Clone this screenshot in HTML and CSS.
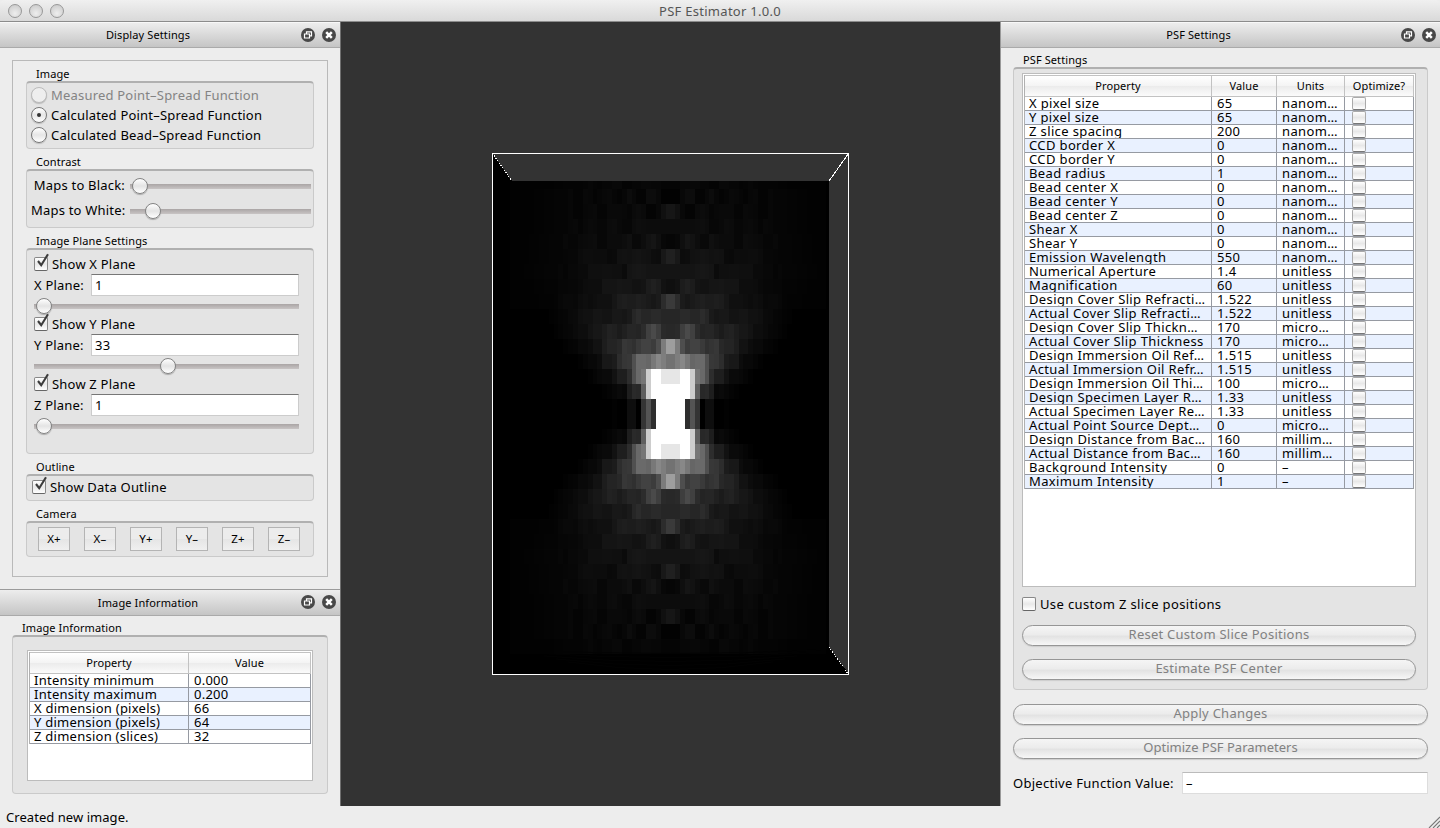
FILE: index.html
```html
<!DOCTYPE html>
<html lang="en">
<head>
<meta charset="utf-8">
<title>PSF Estimator 1.0.0</title>
<link rel="stylesheet" href="styles.css">
</head>
<body>
<svg class="defs" width="0" height="0">
  <symbol id="float" viewBox="0 0 14 14"><circle cx="7" cy="7" r="7" fill="#484848"/><path d="M5.5 5.5V3.8H10.5V7.8H9M3.5 6H8.5V10H3.5Z" fill="none" stroke="#fff" stroke-width="1.2"/></symbol>
  <symbol id="close" viewBox="0 0 14 14"><circle cx="7" cy="7" r="7" fill="#484848"/><path d="M4.2 4.2L9.8 9.8M9.8 4.2L4.2 9.8" stroke="#fff" stroke-width="2.5"/></symbol>
  <symbol id="tick" viewBox="0 0 16 17"><path d="M4 8L7.2 12.2L14 1.2" fill="none" stroke="#3c3c3c" stroke-width="2.1"/></symbol>
</svg>
<div class="titlebar"><div class="lights"><i></i><i></i><i></i></div><span>PSF Estimator 1.0.0</span></div>
<main>
  <aside class="left">
    <div class="dockhead"><span>Display Settings</span><svg><use href="#float"/></svg><svg><use href="#close"/></svg></div>
    <div class="frame">
      <h2>Image</h2>
      <div class="group radios">
        <label class="off"><i class="radio"></i><span>Measured Point–Spread Function</span></label>
        <label><i class="radio on"></i><span>Calculated Point–Spread Function</span></label>
        <label><i class="radio"></i><span>Calculated Bead–Spread Function</span></label>
      </div>
      <h2>Contrast</h2>
      <div class="group contrast">
        <div class="maps"><span>Maps to Black:</span><div class="slider"><i class="black"></i></div></div>
        <div class="maps"><span>Maps to White:</span><div class="slider"><i class="white"></i></div></div>
      </div>
      <h2>Image Plane Settings</h2>
      <div class="group planes">
        <label class="check"><i class="box"><svg><use href="#tick"/></svg></i><span>Show X Plane</span></label>
        <div class="field"><span>X Plane:</span><b>1</b></div>
        <div class="slider"><i class="first"></i></div>
        <label class="check"><i class="box"><svg><use href="#tick"/></svg></i><span>Show Y Plane</span></label>
        <div class="field"><span>Y Plane:</span><b>33</b></div>
        <div class="slider"><i class="middle"></i></div>
        <label class="check"><i class="box"><svg><use href="#tick"/></svg></i><span>Show Z Plane</span></label>
        <div class="field"><span>Z Plane:</span><b>1</b></div>
        <div class="slider"><i class="first"></i></div>
      </div>
      <h2>Outline</h2>
      <div class="group outline"><label class="check"><i class="box"><svg><use href="#tick"/></svg></i><span>Show Data Outline</span></label></div>
      <h2>Camera</h2>
      <div class="group camera"><button>X+</button><button>X–</button><button>Y+</button><button>Y–</button><button>Z+</button><button>Z–</button></div>
    </div>
    <div class="dockhead second"><span>Image Information</span><svg><use href="#float"/></svg><svg><use href="#close"/></svg></div>
    <h2 class="infotitle">Image Information</h2>
    <div class="group infobox">
      <div class="tableframe"><div class="table info" id="info"></div></div>
    </div>
  </aside>
  <section class="view"><svg id="scene" width="659" height="784" viewBox="341 22 659 784"></svg></section>
  <aside class="right">
    <div class="dockhead"><span>PSF Settings</span><svg><use href="#float"/></svg><svg><use href="#close"/></svg></div>
    <h2 class="psftitle">PSF Settings</h2>
    <div class="group psfbox">
      <div class="tableframe"><div class="table psf" id="psf"></div></div>
      <label class="check custom"><i class="box"></i><span>Use custom Z slice positions</span></label>
      <button class="pill p1">Reset Custom Slice Positions</button>
      <button class="pill p2">Estimate PSF Center</button>
    </div>
    <button class="pill outer">Apply Changes</button>
    <button class="pill outer tight">Optimize PSF Parameters</button>
    <div class="objective"><span>Objective Function Value:</span><b>–</b></div>
  </aside>
</main>
<footer><span>Created new image.</span><svg width="12" height="12"><path d="M1 12L12 1M5 12L12 5M9 12L12 9" stroke="#777" stroke-width="1.1"/></svg></footer>
<script src="app.js"></script>
</body>
</html>
```
FILE: styles.css
```css
* { box-sizing: border-box; }
body { margin: 0; width: 1440px; height: 828px; display: flex; flex-direction: column; overflow: hidden; background: #ededed; color: #000; font: 13px/16px "Noto Sans", "Open Sans", sans-serif; white-space: nowrap; }
.defs { position: absolute; }
i, b, h2 { font-style: normal; font-weight: 400; margin: 0; }
button { font: inherit; padding: 0; margin: 0; }
.titlebar { height: 22px; display: grid; grid-template-columns: 72px 1fr 72px; align-items: center; text-align: center; background: linear-gradient(#f0f0f0, #d9d9d9); border-bottom: 1px solid #8c8c8c; border-radius: 5px 5px 0 0; color: #555; letter-spacing: .28px; }
.lights { display: flex; gap: 7px; padding-left: 8px; }
.lights i { width: 14px; height: 14px; border: 1px solid #989898; border-radius: 50%; background: radial-gradient(circle at 50% 70%, #eee, #c6c6c6); }
main { height: 784px; display: grid; grid-template-columns: 341px 659px 440px; letter-spacing: .2px; }
.left { border-right: 1px solid #707070; }
.right { border-left: 1px solid #999; }
.view { background: #333; }
.view svg { display: block; }
.dockhead { height: 26px; display: flex; align-items: center; border-top: 1px solid #f8f8f8; border-bottom: 1px solid #aaa; background: linear-gradient(#ededed, #c5c5c5); font-size: 11px; padding-right: 4px; gap: 7px; }
.dockhead span { flex: 1; text-align: center; padding-left: 2px; letter-spacing: .12px; }
.dockhead svg { width: 14px; height: 14px; margin-top: -1px; }
h2 { height: 14px; font-size: 11px; line-height: 14px; padding-left: 10px; letter-spacing: .1px; }
.group { border: 1px solid #cacaca; border-top: 2px solid #b0b0b0; border-radius: 4px; background: #e4e4e4; }
.frame { margin: 12px 12px 12px; height: 517px; border: 1px solid #b9b9b9; padding: 6px 13px; }
.frame .group { margin-bottom: 6px; }
.radios { height: 68px; padding: 2px 4px; }
.radios label { height: 20px; display: flex; align-items: center; gap: 4px; }
.radio { width: 16px; height: 16px; border: 1px solid #777; border-radius: 50%; background: linear-gradient(#fff, #e6e6e6 50%, #fff); display: grid; place-items: center; box-shadow: 0 1px 1px #bbb; }
.radio.on::after { content: ""; width: 4px; height: 4px; border-radius: 50%; background: #333; }
.off { color: #838383; }
.off .radio { border-color: #bbb; background: #eee; }
.contrast { height: 59px; padding: 2px 1px 0 4px; }
.maps { height: 25px; display: grid; grid-template-columns: 94px 181px; column-gap: 5px; align-items: center; text-align: right; }
.maps > span { margin-top: -1px; }
.slider { height: 18px; display: flex; align-items: center; background: linear-gradient(#aaa5a5, #c8c4c4) center 7px / 100% 5px no-repeat; border-radius: 2px; }
.slider i { width: 16px; height: 16px; border: 1px solid #838383; border-radius: 50%; background: linear-gradient(#fff, #e4e4e4 50%, #fff); box-shadow: 0 1px 1px #aaa; }
.black { margin-left: 2px; }
.white { margin-left: 15px; }
.planes { height: 206px; padding: 4px 14px 0 7px; }
.check { display: flex; align-items: center; gap: 4px; height: 20px; }
.box { width: 14px; height: 14px; border: 1px solid #888; border-bottom-color: #666; border-radius: 2px; background: linear-gradient(#fff, #e8e8e8 50%, #fff); display: block; flex: none; }
.box svg { display: block; width: 16px; height: 17px; margin: -5px 0 0 -1px; overflow: visible; }
.field { display: flex; height: 22px; }
.field span { width: 57px; line-height: 23px; }
.field b { flex: 1; border: 1px solid #ccc; border-top: 1px solid #777; background: #fff; padding-left: 3px; line-height: 21px; }
.planes .slider { height: 14px; margin: 3px 0 1px; background-position: center 5px; }
.first { margin-left: 2px; }
.middle { margin-left: 126px; }
.outline { height: 27px; padding: 1px 5px; }
.camera { height: 36px; padding: 4px 11px; display: flex; gap: 14px; }
.camera button { width: 32px; height: 24px; border: 1px solid #b4b4b4; background: linear-gradient(#ececec 50%, #e5e5e5 50%, #f0f0f0); font-size: 11.5px; letter-spacing: .2px; }
.dockhead.second { height: 27px; border-top: 1px solid #9b9b9b; }
.infotitle { margin: 5px 0 0 12px; }
.infobox { height: 159px; margin: 0 12px; padding: 13px 14px; }
.tableframe { border: 1px solid #bcbcbc; background: #fff; padding: 1px; }
.infobox .tableframe { height: 131px; width: 286px; }
.table { display: grid; border-left: 1px solid #b0b0b0; letter-spacing: .37px; }
.table span { height: 14px; border-right: 1px solid #969aa2; border-bottom: 1px solid #969aa2; line-height: 13px; padding-left: 5px; overflow: hidden; }
.table .first-col { padding-left: 4px; }
.table .alt { background: #e9f1ff; }
.table .head { height: 22px; font-size: 11px; line-height: 20px; text-align: center; padding: 0; letter-spacing: .1px; border-color: #c2c2c2; border-top: 1px solid #c2c2c2; background: linear-gradient(#fff, #f4f4f4 48%, #ebebeb 50%, #fbfbfb); }
.info { grid-template-columns: 159px 122px; letter-spacing: .25px; }
.psf { grid-template-columns: 187px 65px 68px 69px; }
.table .opt { padding-left: 7px; }
.opt .box { height: 13px; border-color: #aaa; border-bottom-color: #777; }
.psftitle { margin: 5px 0 0 12px; }
.psfbox { height: 623px; margin: 0 12px; padding: 4px 11px 0 8px; }
.psfbox .tableframe { height: 514px; }
.custom { margin-top: 7px; letter-spacing: .36px; }
.pill { display: block; width: 100%; height: 21px; border: 1px solid #969696; border-radius: 11px; background: linear-gradient(#f5f5f5, #ececec 45%, #e3e3e3 55%, #f7f7f7); color: #818181; line-height: 17px; padding-bottom: 2px; letter-spacing: .25px; box-shadow: 0 1px 1px #ccc; }
.p1 { margin-top: 11px; }
.p2 { margin-top: 13px; }
.outer { width: 415px; margin: 14px 0 0 12px; }
.outer + .outer { margin-top: 13px; }
.tight { letter-spacing: 0; }
.objective { display: flex; margin: 13px 12px 0; height: 22px; letter-spacing: .28px; }
.objective span { width: 169px; line-height: 23px; }
.objective b { flex: 1; background: #fff; border: 1px solid #ddd; border-top-color: #bbb; padding-left: 3px; line-height: 20px; }
footer { height: 22px; display: flex; justify-content: space-between; align-items: center; padding: 0 0 0 6px; letter-spacing: .05px; }
footer svg { align-self: flex-end; }
```
FILE: app.js
```js
const cell = (text, cls) => `<span class="${cls}">${text}</span>`;

function fillTable(id, heads, rows) {
  let html = heads.map(h => cell(h, "head")).join("");
  rows.forEach((row, n) => {
    const alt = n % 2 ? "alt" : "";
    html += row.map((t, c) => cell(t, alt + (c ? "" : " first-col"))).join("");
    if (heads.length > row.length) html += cell('<i class="box"></i>', alt + " opt");
  });
  document.getElementById(id).innerHTML = html;
}

fillTable("info", ["Property", "Value"], [
  ["Intensity minimum", "0.000"], ["Intensity maximum", "0.200"],
  ["X dimension (pixels)", "66"], ["Y dimension (pixels)", "64"], ["Z dimension (slices)", "32"]
]);

const nm = "nanom…", um = "micro…", mm = "millim…", un = "unitless";
fillTable("psf", ["Property", "Value", "Units", "Optimize?"], [
  ["X pixel size", "65", nm], ["Y pixel size", "65", nm], ["Z slice spacing", "200", nm],
  ["CCD border X", "0", nm], ["CCD border Y", "0", nm], ["Bead radius", "1", nm],
  ["Bead center X", "0", nm], ["Bead center Y", "0", nm], ["Bead center Z", "0", nm],
  ["Shear X", "0", nm], ["Shear Y", "0", nm], ["Emission Wavelength", "550", nm],
  ["Numerical Aperture", "1.4", un], ["Magnification", "60", un],
  ["Design Cover Slip Refracti…", "1.522", un], ["Actual Cover Slip Refracti…", "1.522", un],
  ["Design Cover Slip Thickn…", "170", um], ["Actual Cover Slip Thickness", "170", um],
  ["Design Immersion Oil Ref…", "1.515", un], ["Actual Immersion Oil Refr…", "1.515", un],
  ["Design Immersion Oil Thi…", "100", um], ["Design Specimen Layer R…", "1.33", un],
  ["Actual Specimen Layer Re…", "1.33", un], ["Actual Point Source Dept…", "0", um],
  ["Design Distance from Bac…", "160", mm], ["Actual Distance from Bac…", "160", mm],
  ["Background Intensity", "0", "–"], ["Maximum Intensity", "1", "–"]
]);

// Gray levels by slice distance from focus, then by pixel distance from the axis.
const levels = [
  [255,255,255,46,84,52,0,14,14,0,0,2,0],
  [255,255,255,255,205,95,40,42,30,8,10,7,4,2,0],
  [230,230,255,255,205,118,105,80,45,30,30,18,10,10,8,5,2,0],
  [114,126,136,120,102,106,106,80,56,54,45,28,24,24,12,8,8,5,2,0],
  [158,124,78,60,66,66,58,48,52,55,40,36,36,29,18,18,12,9,9,5,4,2,0],
  [40,42,62,74,64,44,36,38,38,32,27,32,34,28,23,23,19,13,13,10,7,6,4,2,0],
  [38,38,42,42,38,38,44,38,26,22,24,24,19,19,21,21,17,17,15,10,9,6,5,3,2],
  [58,44,27,23,26,29,31,28,28,30,28,22,16,16,16,14,12,14,12,8,9,9,7,4,3],
  [15,18,28,32,28,20,18,18,21,21,22,20,20,20,13,13,13,12,9,7,7,6,6,4],
  [20,20,20,20,20,22,23,22,20,11,15,15,16,16,15,15,15,10,10,8,8,5,7,5],
  [32,24,12,13,17,18,20,19,17,18,17,10,9,12,12,12,13,13,11,7,7,6,5],
  [6,8,15,21,18,13,9,9,16,13,11,11,11,7,7,12,11,10,9,6,6,8,5],
  [12,12,12,12,12,13,14,12,7,7,9,12,11,7,7,9,10,8,5,8,7,5],
  [22,16,8,4,4,10,12,10,6,8,9,9,9,5,5,9,8,7,4,4,7,5],
  [2,2,8,12,12,4,4,8,12,7,4,6,9,8,6,4,7,8,4,4,7,5],
  [5,5,7,7,8,8,6,6,4,4,8,8,6,6,4,5,7,5,4,4]
];
const cx = 670.4, step = 4.87, rowH = 15, mid = 414;
const rect = (x, y, w, h, v) => `<rect x="${x.toFixed(1)}" y="${y}" width="${w.toFixed(1)}" height="${h}" fill="rgb(${v},${v},${v})"/>`;
let art = '<g shape-rendering="crispEdges"><path d="M492 153L512 181H829V647L849 674H492Z" fill="#000"/>';
levels.forEach((row, k) => {
  const top = Math.max(181, mid - rowH * (k + 1)), height = mid - rowH * k - top;
  const lower = Math.min(rowH, 654 - (mid + rowH * k));
  for (let c = 0; c < 33; c++) {
    const v = c < row.length ? row[c] : k < 7 ? 0 : Math.max(2, Math.round(row[row.length - 1] - (c - row.length) / 2));
    for (const x of [cx + c * step, cx - (c + 1) * step]) {
      if (x > 826) continue;
      art += rect(x, top, step, height, v) + rect(x, mid + rowH * k, step, lower, v);
    }
  }
});
art += '</g><g fill="none" stroke="#030303">';
for (let n = 0; n < 5; n++) art += `<path d="M${520 + n * 12} ${650 + n * 3}Q670 ${657 + n * 5} ${821 - n * 12} ${650 + n * 3}"/>`;
art += '</g><g fill="none" stroke="#fff" shape-rendering="crispEdges"><rect x="492.5" y="153.5" width="356" height="521"/><path d="M848.5 153.5L829 181"/><path d="M492.5 153.5L512 181M829 647L848.5 674.5" stroke-dasharray="1.3 1.5"/></g>';
document.getElementById("scene").innerHTML = art;
```
